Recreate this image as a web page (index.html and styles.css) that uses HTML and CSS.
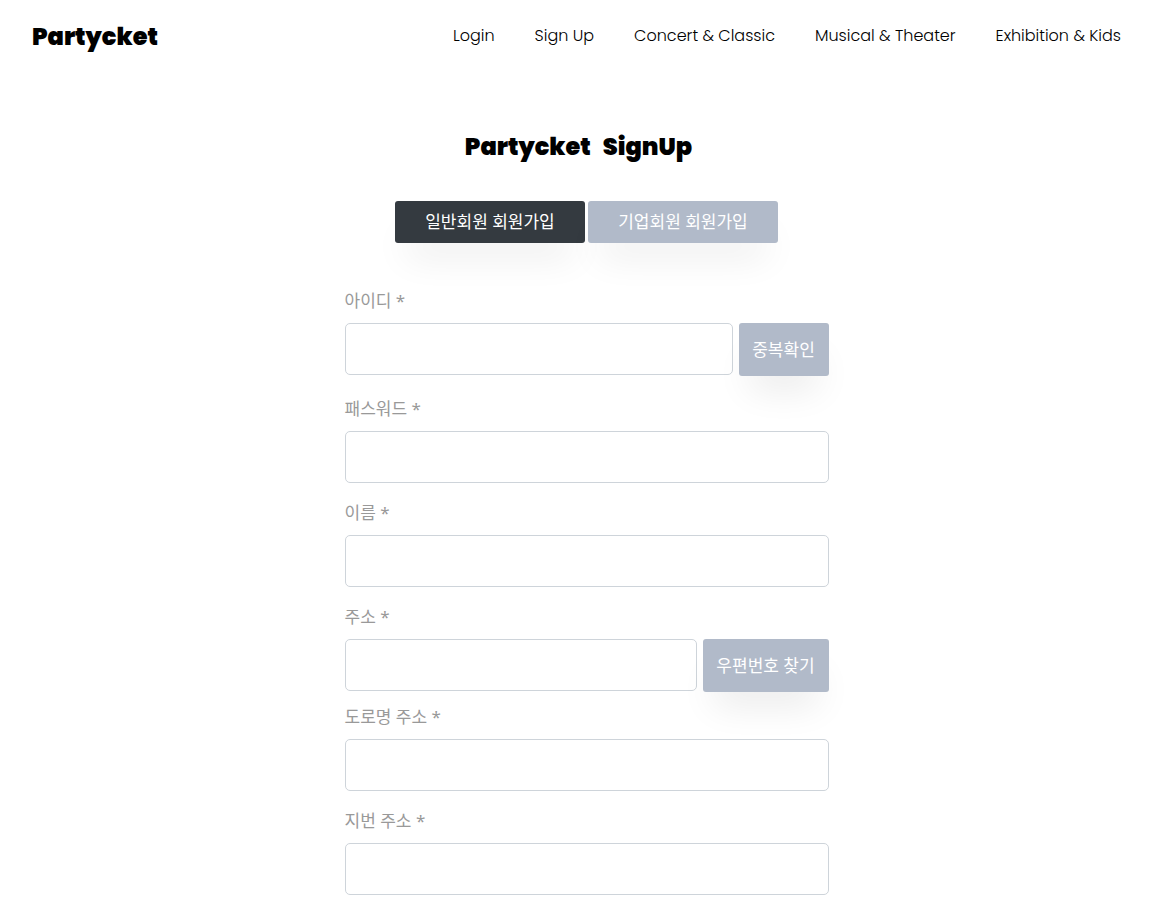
FILE: index.html
```html
<!DOCTYPE html>
<html lang="ko">
<head>
<meta charset="utf-8">
<meta name="viewport" content="width=device-width, initial-scale=1">
<title>Partycket SignUp</title>
<link rel="stylesheet" href="styles.css">
</head>
<body>
<header class="header">
  <a class="logo" href="#">Partycket</a>
  <nav class="nav">
    <a href="#">Login</a>
    <a href="#">Sign Up</a>
    <a href="#">Concert &amp; Classic</a>
    <a href="#">Musical &amp; Theater</a>
    <a href="#">Exhibition &amp; Kids</a>
  </nav>
</header>
<main class="main">
  <h1 class="title"><span>Partycket</span> <span>SignUp</span></h1>
  <div class="tabs">
    <button class="btn tab active" type="button">일반회원 회원가입</button>
    <button class="btn tab" type="button">기업회원 회원가입</button>
  </div>
  <form class="form">
    <div class="field field-id">
      <label for="userid">아이디 *</label>
      <div class="row">
        <input id="userid" type="text">
        <button class="btn check" type="button">중복확인</button>
      </div>
    </div>
    <div class="field">
      <label for="password">패스워드 *</label>
      <input id="password" type="password">
    </div>
    <div class="field">
      <label for="name">이름 *</label>
      <input id="name" type="text">
    </div>
    <div class="field field-zip">
      <label for="zip">주소 *</label>
      <div class="row">
        <input id="zip" type="text">
        <button class="btn find" type="button">우편번호 찾기</button>
      </div>
    </div>
    <div class="field">
      <label for="road">도로명 주소 *</label>
      <input id="road" type="text">
    </div>
    <div class="field">
      <label for="lot">지번 주소 *</label>
      <input id="lot" type="text">
    </div>
  </form>
</main>
</body>
</html>
```
FILE: styles.css
```css
* {
  box-sizing: border-box;
}

body {
  margin: 0;
  background: #fff;
  color: #000;
  font-family: Poppins, Inter, "Noto Sans CJK KR", sans-serif;
  font-size: 16px;
  line-height: 24px;
}

.header {
  display: flex;
  align-items: center;
  justify-content: space-between;
  padding: 19px 44px 18px 32px;
}

.logo,
.title {
  font-size: 24px;
  font-weight: 900;
  line-height: 36px;
}

.header a {
  color: #000;
  text-decoration: none;
}

.nav {
  display: flex;
  gap: 40px;
  padding-bottom: 2px;
  font-size: 16px;
  font-weight: 300;
}

.main {
  padding-left: 8px;
}

.title {
  display: flex;
  justify-content: center;
  gap: 12px;
  margin: 56px 0 0;
  padding-right: 16px;
}

.tabs {
  display: flex;
  justify-content: center;
  gap: 3px;
  margin-top: 36px;
}

.btn {
  border: 0;
  border-radius: 3px;
  background: #b1bac9;
  color: #fff;
  font-family: "Noto Sans", "Noto Sans CJK KR", sans-serif;
  font-size: 17px;
  line-height: 24px;
  white-space: nowrap;
  box-shadow: 0 24px 36px -11px rgba(0, 0, 0, 0.09);
}

.tab {
  width: 190px;
  height: 42px;
}

.active {
  background: #343a40;
}

.form {
  max-width: 484px;
  margin: 46px auto 0;
}

.field {
  margin-bottom: 18px;
}

.field-id {
  margin-bottom: 21px;
}

.field-zip {
  margin-bottom: 13px;
}

.field label {
  display: block;
  margin-bottom: 10px;
  color: #999;
  font-family: "Noto Sans", "Noto Sans CJK KR", sans-serif;
  font-size: 17px;
}

.field input {
  display: block;
  width: 100%;
  height: 52px;
  padding: 0 12px;
  border: 1px solid #ced4da;
  border-radius: 5px;
  background: transparent;
  font: inherit;
}

.row {
  display: flex;
  gap: 6px;
}

.row input {
  flex: 1;
  min-width: 0;
}

.check,
.find {
  height: 53px;
  padding: 0 12px;
}

.check {
  width: 90px;
}

.find {
  width: 126px;
}
```
